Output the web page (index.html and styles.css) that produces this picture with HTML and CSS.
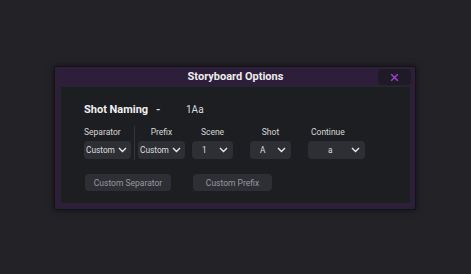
FILE: index.html
```html
<!DOCTYPE html>
<html lang="en">
  <head>
    <meta charset="UTF-8" />
    <meta name="viewport" content="width=device-width, initial-scale=1.0" />
    <title>Storyboard Options</title>
    <link rel="stylesheet" href="styles.css">
  </head>
  <body>
    <div class="dialog">
      <div class="titlebar">
        <span></span>
        <h1 class="title">Storyboard Options</h1>
        <button class="close" aria-label="Close">
          <svg width="9" height="9" viewBox="0 0 9 9">
            <path d="M1.2 1.2 L7.8 7.8 M7.8 1.2 L1.2 7.8" stroke="#9c42cf" stroke-width="1.5" fill="none" />
          </svg>
        </button>
      </div>
      <div class="panel">
        <div class="naming">
          <span class="naming-label">Shot Naming</span>
          <span class="naming-dash">-</span>
          <span class="naming-value">1Aa</span>
        </div>

        <div class="fields">
          <div class="field field-sep">
            <label class="lbl lbl-left">Separator</label>
            <div class="select w47"><span>Custom</span><svg class="chev" width="9" height="6" viewBox="0 0 9 6"><path d="M1 1 L4.5 4.5 L8 1" stroke="#e8e8e8" stroke-width="1.4" fill="none" /></svg></div>
          </div>
          <div class="divider"></div>
          <div class="field">
            <label class="lbl">Prefix</label>
            <div class="select w47"><span>Custom</span><svg class="chev" width="9" height="6" viewBox="0 0 9 6"><path d="M1 1 L4.5 4.5 L8 1" stroke="#e8e8e8" stroke-width="1.4" fill="none" /></svg></div>
          </div>
          <div class="field ml7">
            <label class="lbl">Scene</label>
            <div class="select w41 pad-val"><span>1</span><svg class="chev" width="9" height="6" viewBox="0 0 9 6"><path d="M1 1 L4.5 4.5 L8 1" stroke="#e8e8e8" stroke-width="1.4" fill="none" /></svg></div>
          </div>
          <div class="field ml17">
            <label class="lbl">Shot</label>
            <div class="select w41 pad-val"><span>A</span><svg class="chev" width="9" height="6" viewBox="0 0 9 6"><path d="M1 1 L4.5 4.5 L8 1" stroke="#e8e8e8" stroke-width="1.4" fill="none" /></svg></div>
          </div>
          <div class="field ml17">
            <label class="lbl lbl-left lbl-cont">Continue</label>
            <div class="select w57 pad-cont"><span>a</span><svg class="chev" width="9" height="6" viewBox="0 0 9 6"><path d="M1 1 L4.5 4.5 L8 1" stroke="#e8e8e8" stroke-width="1.4" fill="none" /></svg></div>
          </div>
        </div>

        <div class="actions">
          <button class="btn btn-sep">Custom Separator</button>
          <button class="btn btn-prefix">Custom Prefix</button>
        </div>
      </div>
    </div>
  </body>
</html>
```

FILE: styles.css
```css
html,
body {
  font-family: Roboto, "Liberation Sans", sans-serif;
}

body {
  margin: 0;
  width: 471px;
  height: 274px;
  background: #232327;
  padding-top: 66px;
  box-sizing: border-box;
}

.dialog {
  margin-left: 54px;
  width: 362px;
  height: 144px;
  box-sizing: border-box;
  padding: 0 4px 5px 5px;
  background: #2d1f3a;
  border: 1px solid #141417;
  box-shadow: 0 0 6px rgba(0, 0, 0, 0.55);
  display: flex;
  flex-direction: column;
}

.titlebar {
  height: 19px;
  display: grid;
  grid-template-columns: 1fr auto 1fr;
  align-items: center;
}

.title {
  margin: 0;
  font-size: 11px;
  font-weight: 700;
  color: #ececec;
}

.close {
  justify-self: end;
  width: 33px;
  height: 16px;
  margin-top: 1px;
  border: none;
  border-radius: 4px;
  background: #1f1b26;
  padding: 0;
  display: flex;
  align-items: center;
  justify-content: center;
}

.panel {
  flex: 1;
  background: #1d1e22;
  border: 1px solid #26272c;
  padding: 15px 0 0 23px;
}

.naming {
  display: flex;
  align-items: center;
  height: 14px;
}

.naming-label {
  font-size: 11px;
  font-weight: 700;
  color: #f0f0f0;
  width: 72px;
}

.naming-dash {
  font-size: 11px;
  font-weight: 700;
  color: #e0e0e0;
  width: 30px;
}

.naming-value {
  font-size: 10px;
  color: #dcdcdc;
}

.fields {
  display: flex;
  align-items: flex-start;
  margin-top: 9px;
}

.field {
  display: flex;
  flex-direction: column;
}

.lbl {
  font-size: 8.5px;
  color: #d6d6d6;
  text-align: center;
  height: 14px;
  line-height: 14px;
  margin-bottom: 2px;
}

.lbl-left {
  text-align: left;
}

.lbl-cont {
  padding-left: 3px;
}

.divider {
  width: 1px;
  height: 34px;
  background: #34353b;
  margin: 1px 3px 0 3px;
}

.select {
  height: 18px;
  box-sizing: border-box;
  background: #2e2f35;
  border-radius: 4px;
  display: flex;
  align-items: center;
  justify-content: space-between;
  padding: 0 4px 0 2px;
  font-size: 8.3px;
  color: #dedede;
}

.pad-val {
  padding-left: 10px;
  padding-right: 5px;
}

.pad-cont {
  padding-left: 20px;
  padding-right: 5px;
}

.w47 {
  width: 47px;
}

.w41 {
  width: 41px;
}

.w57 {
  width: 57px;
}

.ml7 {
  margin-left: 7px;
}

.ml17 {
  margin-left: 17px;
}

.actions {
  display: flex;
  margin-top: 14px;
  margin-left: 1px;
}

.btn {
  height: 17px;
  border: none;
  border-radius: 4px;
  background: #2e2f35;
  color: #97989e;
  font-family: Roboto, "Liberation Sans", sans-serif;
  font-size: 8.5px;
  padding: 0;
}

.btn-sep {
  width: 86px;
}

.btn-prefix {
  width: 79px;
  margin-left: 22px;
}
```
